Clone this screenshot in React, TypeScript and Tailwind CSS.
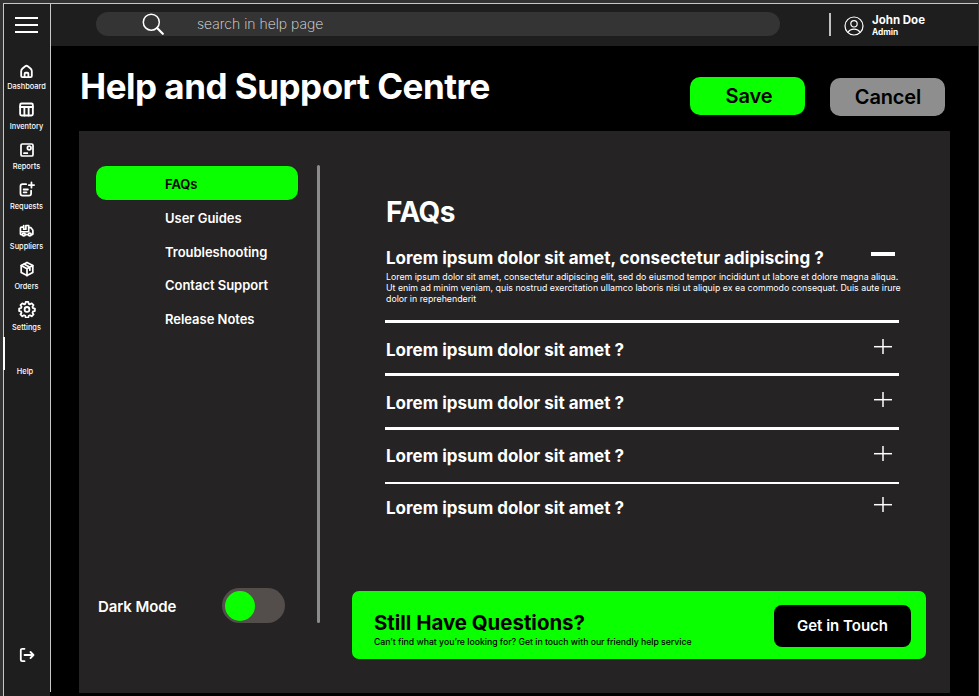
import type { ReactNode } from "react";

type NavEntry = { label: string; icon: ReactNode; offset: string; gap: string };

const stroke = {
  fill: "none",
  stroke: "currentColor",
  strokeWidth: 2.9,
  strokeLinecap: "round" as const,
  strokeLinejoin: "round" as const,
};

const sideItems: NavEntry[] = [
  {
    label: "Dashboard",
    offset: "pb-0",
    gap: "mt-[2px]",
    icon: (
      <svg viewBox="0 0 24 24" className="size-[15px]" {...stroke}>
        <path d="M3.500 11.500C3.500 9.500 4.200 8.500 5.600 7.300L10 3.600c1.300-1 2.700-1 4 0l4.400 3.700c1.400 1.200 2.100 2.200 2.100 4.200V19c0 1.300-.8 2-2 2h-13c-1.200 0-2-.7-2-2z" />
        <path d="M9 21v-5.500c0-1 .6-1.500 1.500-1.500h3c.9 0 1.500.5 1.500 1.500V21" />
      </svg>
    ),
  },
  {
    label: "Inventory",
    offset: "pb-[3px]",
    gap: "mt-[2px]",
    icon: (
      <svg viewBox="0 0 24 24" className="size-[17px]" {...stroke} strokeWidth={2.6}>
        <rect x="3" y="3.500" width="18" height="17" rx="2" />
        <path d="M3 8.500h18M9 8.500v12M15 8.500v12" />
      </svg>
    ),
  },
  {
    label: "Reports",
    offset: "pb-[3px]",
    gap: "mt-[2px]",
    icon: (
      <svg viewBox="0 0 24 24" className="size-[16px]" {...stroke} strokeWidth={2.6}>
        <rect x="3" y="3" width="18" height="18" rx="2" />
        <path d="M7.500 16.700h5" />
        <circle cx="15.300" cy="9" r="2.700" />
      </svg>
    ),
  },
  {
    label: "Requests",
    offset: "pb-[4px]",
    gap: "mt-[2px]",
    icon: (
      <svg viewBox="0 0 24 24" className="size-[17px]" {...stroke} strokeWidth={2.5}>
        <path d="M11.500 4.500H6.500C4.500 4.500 3.500 5.500 3.500 7.500v10c0 2 1 3 3 3h9c2 0 3-1 3-3v-4" />
        <path d="M8 12h6M8 16h4M19 2v7.500M15.200 5.700h7.600" />
      </svg>
    ),
  },
  {
    label: "Suppliers",
    offset: "pb-[1px]",
    gap: "mt-[2px]",
    icon: (
      <svg viewBox="0 0 24 24" className="size-[15px]" {...stroke} strokeWidth={2.7}>
        <path d="M11 4h4.500v10H2.500M5.500 18.500H3.500c-.8 0-1.200-.5-1.200-1.200V8C2.300 7 3 6.500 4 6.500h3M15.500 7.500h3.700l3 4v6c0 .7-.5 1-1 1h-1.500M10 18.500h5M7.500 4v6M11 4v6H7.500" />
        <circle cx="7.700" cy="18.500" r="2.200" />
        <circle cx="17.300" cy="18.500" r="2.200" />
      </svg>
    ),
  },
  {
    label: "Orders",
    offset: "pb-[4px]",
    gap: "mt-[2px]",
    icon: (
      <svg viewBox="0 0 24 24" className="size-[16px]" {...stroke} strokeWidth={2.6}>
        <path d="M12 2.200l8.700 4.700v10.200L12 21.800l-8.700-4.700V6.900z" />
        <path d="M3.300 6.900L12 11.800l8.700-4.900M12 11.800v10M7.500 4.600l8.800 4.900v4.200" />
      </svg>
    ),
  },
  {
    label: "Settings",
    offset: "pb-[4px]",
    gap: "mt-[3px]",
    icon: (
      <svg viewBox="0 0 24 24" className="size-[18px]" {...stroke} strokeWidth={2.4}>
        <path d="M10.300 2.500h3.400l.6 2.600 1.700.7 2.300-1.400 2.400 2.400-1.400 2.300.7 1.700 2.500.6v3.300l-2.500.6-.7 1.700 1.400 2.300-2.400 2.400-2.300-1.400-1.700.7-.6 2.500h-3.400l-.6-2.500-1.700-.7-2.300 1.400-2.400-2.400 1.400-2.300-.7-1.700-2.500-.6v-3.300l2.500-.6.7-1.700-1.400-2.300 2.400-2.400L8 5.800l1.700-.7z" />
        <circle cx="12" cy="12.500" r="3.200" />
      </svg>
    ),
  },
];

const topics = ["User Guides", "Troubleshooting", "Contact Support", "Release Notes"];

function Plus() {
  return (
    <svg viewBox="0 0 18 16" className="h-4 w-[18px]" fill="none" stroke="white">
      <path d="M0 7.700h18" strokeWidth="1.500" />
      <path d="M9 0v15" strokeWidth="1.500" />
    </svg>
  );
}

function Question({ className, text = "pt-px" }: { className: string; text?: string }) {
  return (
    <div className={"flex items-start justify-between pr-[7px] pl-px " + className}>
      <span className={"text-[17px] leading-5 font-bold whitespace-nowrap " + text}>Lorem ipsum dolor sit amet ?</span>
      <Plus />
    </div>
  );
}

function Sidebar() {
  return (
    <aside className="flex h-full w-[46px] shrink-0 flex-col items-center bg-[#1e1e1e]">
      <button className="mt-[13px] mr-[1px] flex h-4 w-[23px] shrink-0 flex-col justify-between">
        <i className="h-[2px] w-full bg-white" />
        <i className="h-[2px] w-full bg-white" />
        <i className="h-[2px] w-full bg-white" />
      </button>
      <nav className="mt-[29px] flex w-full flex-col items-center">
        {sideItems.map((item) => (
          <a key={item.label} className="flex h-10 w-full shrink-0 flex-col items-center">
            <span className={"flex h-[18px] shrink-0 items-center justify-center pr-px " + item.offset}>{item.icon}</span>
            <span className={"pr-px text-[7.400px] leading-[9px] font-medium whitespace-nowrap " + item.gap}>{item.label}</span>
          </a>
        ))}
      </nav>
      <div className="flex h-[48px] w-full shrink-0">
        <i className="-mt-[5px] -ml-px h-[33px] w-[2px] shrink-0 bg-white" />
        <span className="mt-[25px] w-[40px] text-center text-[7.400px] leading-[9px] font-medium">Help</span>
      </div>
      <svg viewBox="0 0 16 16" className="mt-auto mr-px mb-[33px] size-4" fill="none" stroke="white" strokeWidth="1.800" strokeLinecap="round" strokeLinejoin="round">
        <path d="M5.500 1.800H3.400c-1 0-1.600.6-1.600 1.600v9.200c0 1 .6 1.600 1.600 1.600h2.100M5.500 8h9M11.500 5l3 3-3 3" />
      </svg>
    </aside>
  );
}

function Header() {
  return (
    <header className="flex h-[42px] shrink-0 bg-[#1e1e1e] text-white">
      <div className="mt-2 ml-[45px] flex h-6 w-[684px] items-center rounded-full bg-[#343434]">
        <svg viewBox="0 0 22 22" className="ml-[46px] size-[22px]" fill="none" stroke="white" strokeLinecap="round">
          <circle cx="9.300" cy="9.200" r="8" strokeWidth="1.500" />
          <path d="M15.100 15l5.700 5.800" strokeWidth="2.200" />
        </svg>
        <span className="-mt-[2px] ml-[33px] text-[14px] font-extralight whitespace-nowrap text-[#e0e0e0]">search in help page</span>
      </div>
      <i className="mt-[9px] ml-[49px] h-[23px] w-[2px] bg-[#c0c0c0]" />
      <svg viewBox="0 0 20 20" className="mt-3 ml-[13px] size-5" fill="none" stroke="white" strokeWidth="1.200">
        <circle cx="10" cy="10" r="9" />
        <circle cx="10" cy="7.800" r="3.200" />
        <path d="M4 16.500c1.200-2.400 3.400-3.300 6-3.300s4.800.9 6 3.300" />
      </svg>
      <div className="mt-[9px] ml-[8px] whitespace-nowrap">
        <p className="text-[11.500px] leading-[14px] font-bold">John Doe</p>
        <p className="text-[8.300px] leading-[10px] font-bold">Admin</p>
      </div>
    </header>
  );
}

function TopicList() {
  return (
    <section className="flex w-[219px] shrink-0 flex-col pt-[35px] pl-[17px]">
      <a className="flex h-[34px] w-[202px] items-center rounded-[10px] bg-[#0aff00] pl-[69px] text-[13px] font-semibold tracking-[-0.030px] text-black">
        <span className="pt-[3px]">FAQs</span>
      </a>
      <div className="mt-[2px] flex flex-col pl-[69px]">
        {topics.map((topic) => (
          <a key={topic} className="flex h-[33.700px] items-center text-[13px] font-semibold tracking-[-0.030px] whitespace-nowrap">
            {topic}
          </a>
        ))}
      </div>
      <div className="mt-auto mb-[70px] flex items-center pl-[2px]">
        <span className="w-[124px] pt-[3px] text-[15px] font-semibold tracking-[-0.100px] whitespace-nowrap">Dark Mode</span>
        <button className="flex h-[35px] w-[63px] shrink-0 items-center rounded-full bg-[#534d4c] pl-[3px]">
          <i className="size-[30px] rounded-full bg-[#0aff00]" />
        </button>
      </div>
    </section>
  );
}

function Faqs() {
  return (
    <section className="flex min-w-0 flex-1 flex-col">
      <div className="ml-[65px] flex w-[514px] flex-col">
        <h2 className="mt-[64px] pl-px text-[28px] leading-[34px] font-bold tracking-[-0.500px]">FAQs</h2>
        <div className="mt-[19px] flex h-5 justify-between pr-1 pl-px">
          <h3 className="text-[17px] leading-5 font-bold whitespace-nowrap">Lorem ipsum dolor sit amet, consectetur adipiscing ?</h3>
          <i className="mt-1 h-1 w-6 bg-white" />
        </div>
        <p className="mt-[3px] pl-px text-[8.800px] leading-[11px] font-normal whitespace-nowrap">
          Lorem ipsum dolor sit amet, consectetur adipiscing elit, sed do eiusmod tempor incididunt ut labore et dolore magna aliqua.
          <br />
          Ut enim ad minim veniam, quis nostrud exercitation ullamco laboris nisi ut aliquip ex ea commodo consequat. Duis aute irure
          <br />
          dolor in reprehenderit
        </p>
        <i className="mt-4 h-[3px] bg-white" />
        <Question className="h-[50px] pt-[16px]" />
        <i className="h-[3px] bg-white" />
        <Question className="h-[51px] pt-[16px]" />
        <i className="h-[3px] bg-white" />
        <Question className="h-[52px] pt-[16px]" text="pt-0" />
        <i className="h-[2px] bg-white" />
        <Question className="h-[52px] pt-[13px]" />
      </div>
      <div className="mt-auto mb-[34px] ml-[32px] flex h-[68px] w-[574px] shrink-0 items-center rounded-[7px] bg-[#0aff00] pr-[15px] pl-[22px] text-black">
        <div className="flex flex-1 flex-col whitespace-nowrap">
          <p className="mt-[8px] text-[20.400px] leading-6 font-bold">Still Have Questions?</p>
          <p className="mt-[2px] text-[8.690px] leading-[11px] font-medium">Can’t find what you’re looking for? Get in touch with our friendly help service</p>
        </div>
        <button className="mt-[2px] h-[42px] w-[137px] rounded-[8px] bg-black text-[15px] font-semibold text-white">Get in Touch</button>
      </div>
    </section>
  );
}

export default function App() {
  return (
    <div className="flex h-[696px] w-[979px] overflow-hidden border-t-[3px] border-r border-l-[3px] border-[#333] bg-black font-['Inter','Liberation_Sans',sans-serif] text-white">
      <div className="flex min-w-0 flex-1 border-t border-l border-[#c8c8c8]">
        <Sidebar />
        <i className="h-[688px] w-px shrink-0 bg-[#c8c8c8]" />
        <main className="flex min-w-0 flex-1 flex-col">
          <Header />
          <div className="flex h-[85px] shrink-0 pl-[28px]">
            <h1 className="mt-[18px] w-[611px] pl-px text-[35px] leading-[44px] font-bold tracking-[-0.500px] whitespace-nowrap">Help and Support Centre</h1>
            <button className="mt-[31px] h-[38px] w-[115px] rounded-[10px] bg-[#0aff00] pl-[3px] text-[20px] font-semibold tracking-[-0.150px] text-black">Save</button>
            <button className="mt-[32px] ml-[25px] h-[38px] w-[115px] rounded-[10px] bg-[#8e8e8e] pl-px text-[20px] font-semibold tracking-[-0.150px] text-black">Cancel</button>
          </div>
          <div className="ml-[28px] flex h-[562px] w-[871px] shrink-0 bg-[#252324]">
            <TopicList />
            <i className="mt-[34px] ml-[19px] h-[458px] w-[3px] shrink-0 rounded-full bg-[#8b8b8b]" />
            <Faqs />
          </div>
        </main>
      </div>
    </div>
  );
}
